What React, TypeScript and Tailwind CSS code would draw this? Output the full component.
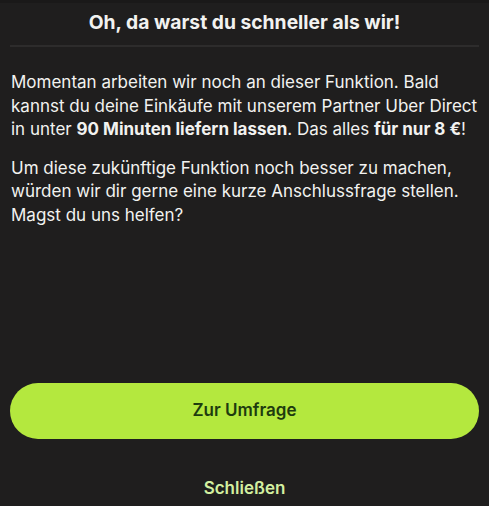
import React from "react";

export default function App() {
  return (
    <div
      className="w-[489px] h-[506px] bg-[#1f1e1e] text-[#f2f2f0] flex flex-col overflow-hidden"
      style={{ fontFamily: "Inter, 'Noto Sans', sans-serif" }}
    >
      <div className="h-[3px] bg-[#1a1919]" />
      <h1 className="text-center text-[19.3px] font-bold leading-[28px] mt-[5px]">
        Oh, da warst du schneller als wir!
      </h1>
      <div className="mx-[10px] mt-[9px] h-[2px] bg-[#2d2c2c]" />
      <div className="px-[11px] mt-[24px] text-[17px] leading-[23.5px]">
        <p>
          Momentan arbeiten wir noch an dieser Funktion. Bald kannst du deine
          Einkäufe mit unserem Partner Uber Direct in unter{" "}
          <b className="font-bold">90 Minuten liefern lassen</b>. Das alles{" "}
          <b className="font-bold">für nur 8 €</b>!
        </p>
        <p className="mt-[15px]">
          Um diese zukünftige Funktion noch besser zu machen, würden wir dir
          gerne eine kurze Anschlussfrage stellen. Magst du uns helfen?
        </p>
      </div>
      <div className="flex-1" />
      <button className="mx-[10px] h-[56px] rounded-full bg-[#b4e83e] text-[#1e3b0f] text-[17px] font-semibold">
        Zur Umfrage
      </button>
      <button className="mt-[37px] mb-[6px] h-[24px] text-[#d3f0a0] text-[17px] font-semibold">
        Schließen
      </button>
    </div>
  );
}
